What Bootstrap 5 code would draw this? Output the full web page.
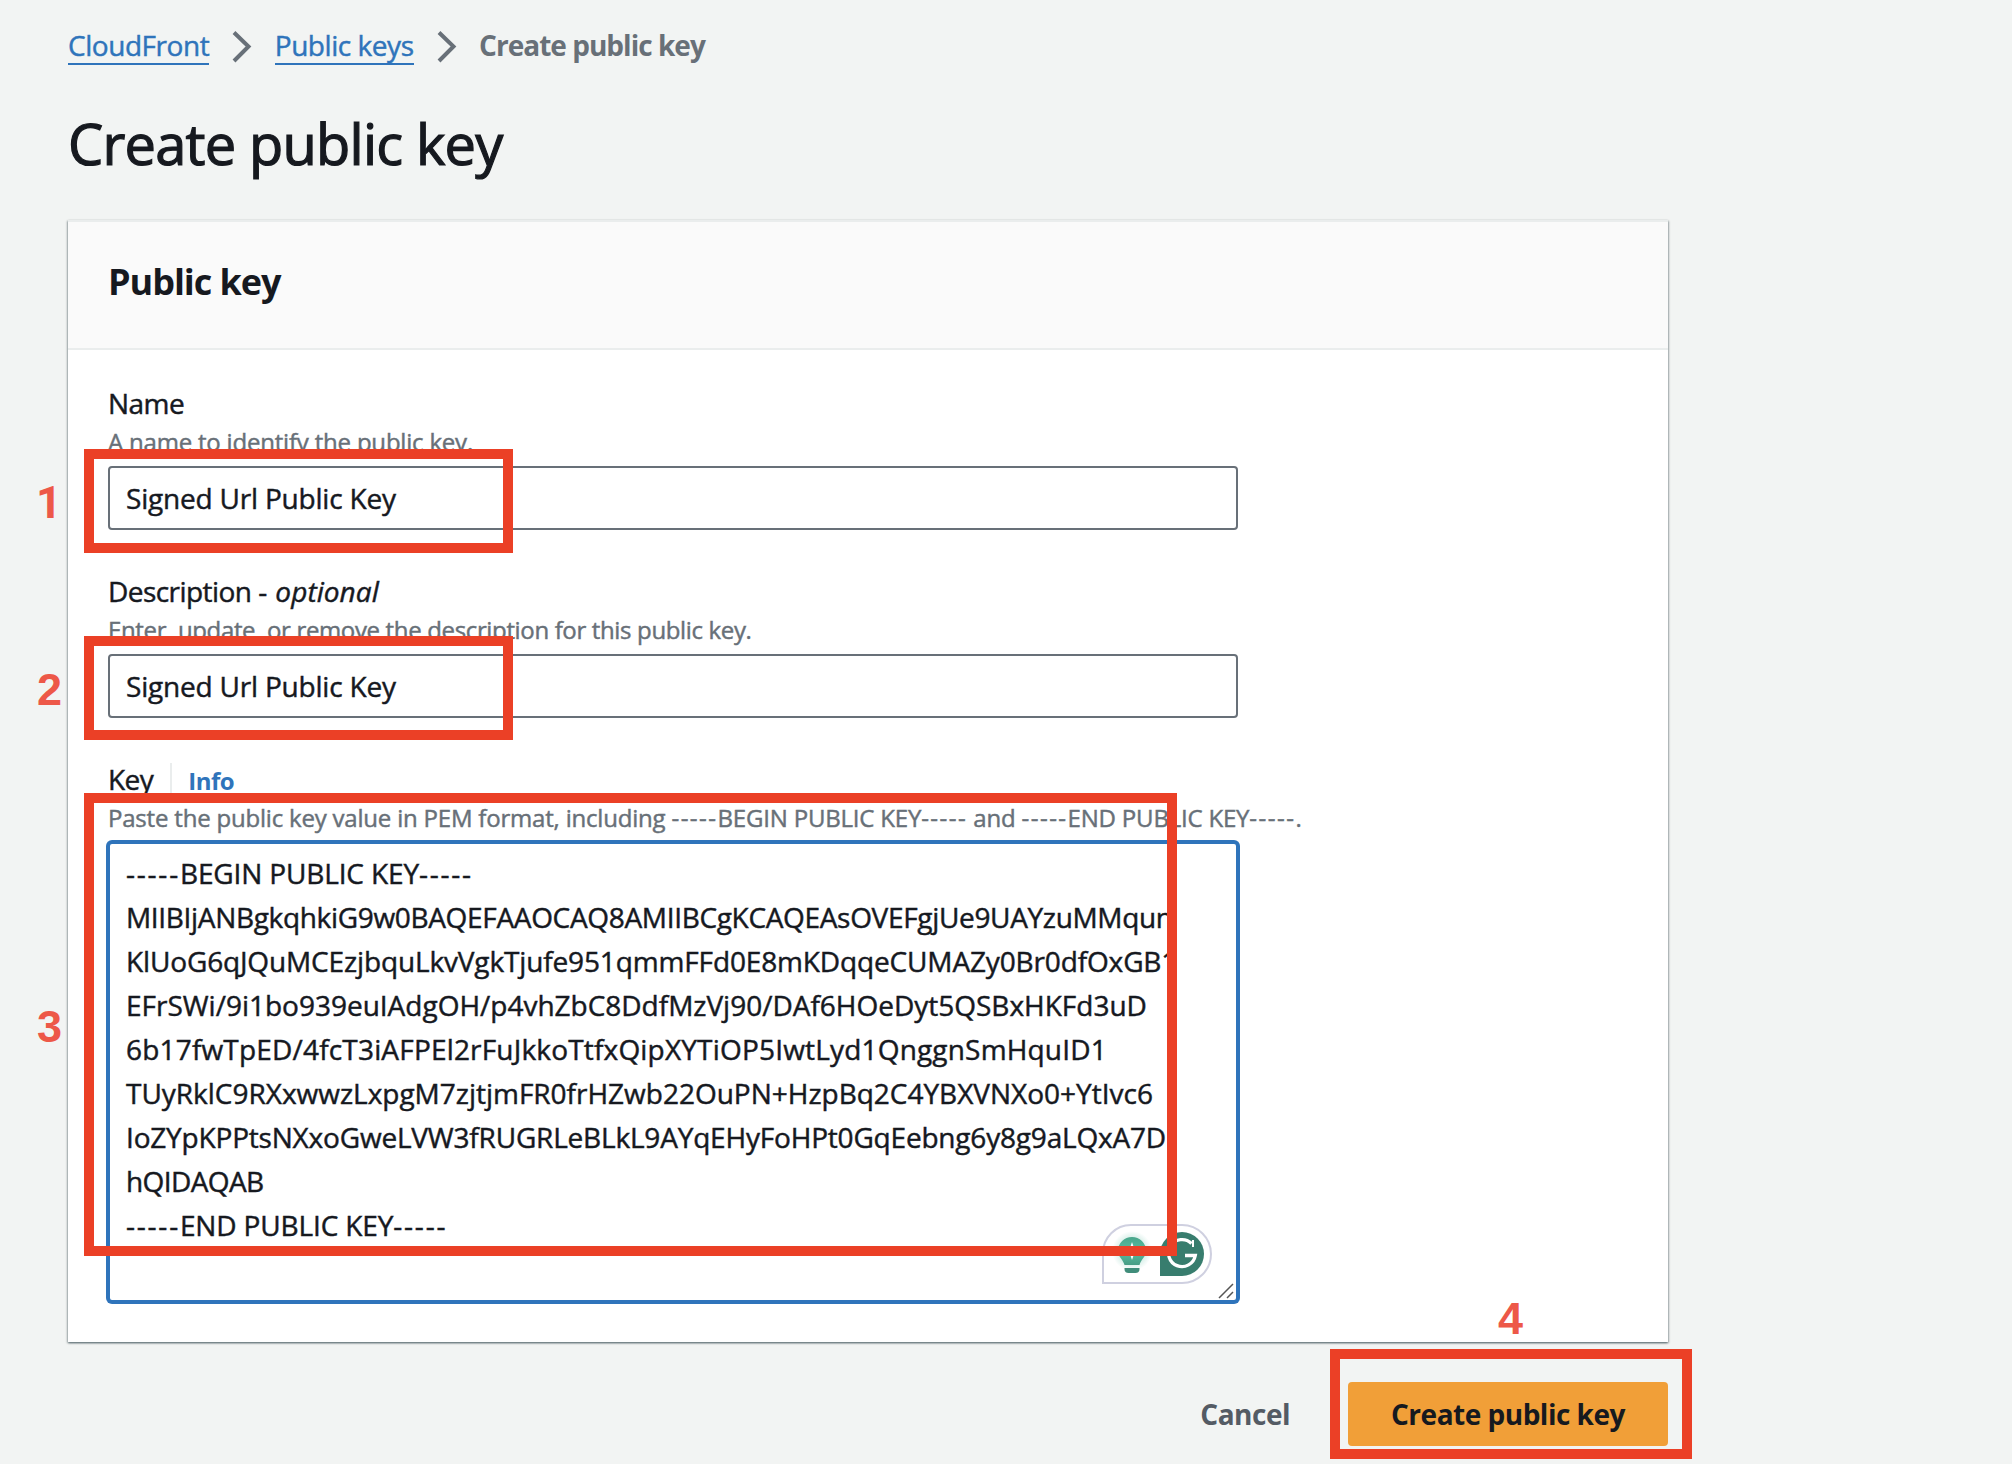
<!DOCTYPE html>
<html lang="en">
<head>
<meta charset="utf-8">
<meta name="viewport" content="width=device-width, initial-scale=1">
<title>Create public key</title>
<link href="https://cdn.jsdelivr.net/npm/bootstrap@5.3.0/dist/css/bootstrap.min.css" rel="stylesheet">
<style>
  body { background: #f2f4f3; color: #16191f; font-family: "Open Sans", "Noto Sans", sans-serif; font-size: 28px; line-height: 44px; -webkit-text-stroke: .45px; }
  .page-wrap { height: 1464px; padding: 23px 0 0 68px; overflow: hidden; }
  .page-col { width: 1600px; }
  .crumbs { height: 44px; }
  .crumbs a { color: #2f74bb; text-decoration: none; height: 42px; line-height: 45px; border-bottom: 2px solid #2f74bb; letter-spacing: -.45px; }
  .crumbs svg { margin: 8px 22.500px 0 23px; }
  .crumb-now { color: #687078; font-weight: 700; line-height: 45px; letter-spacing: -.98px; -webkit-text-stroke: 0; }
  .page-title { font-size: 56px; line-height: 72px; font-weight: 400; margin: 39px 0 42px; padding-top: 1px; height: 72px; letter-spacing: -.8px; -webkit-text-stroke: 1.2px; }
  .panel { border: 0; border-radius: 0; box-shadow: 0 1px 2px 0 #001c2480, 1px 1px 2px 0 #001c2430, -1px 1px 2px 0 #001c2430; }
  .panel-head { background: #fafafa; border-top: 2px solid #eaeded; border-bottom: 2px solid #eaeded; border-radius: 0 !important; padding: 38px 40px 44px; }
  .panel-title { font-size: 36px; line-height: 44px; font-weight: 700; letter-spacing: -1.05px; -webkit-text-stroke: 0; }
  .panel-form { padding: 31px 40px 40px; }
  .field { margin-bottom: 39px; width: 1130px; }
  .field-label { height: 44px; letter-spacing: -.55px; white-space: pre; }
  .field-label i { letter-spacing: .05px; margin-left: 2px; }
  .hint { color: #687078; font-size: 24px; line-height: 34px; margin-bottom: 7px; letter-spacing: -.2px; white-space: nowrap; }
  .hint-tight { letter-spacing: -.35px; }
  .text-input { height: 64px; border: 2px solid #687078; border-radius: 4px; padding: 0 16px; font-size: 28px; line-height: 44px; color: #16191f; letter-spacing: -.2px; }
  .key-box { height: 460px; border: 2px solid #2f74bb; border-radius: 4px; box-shadow: 0 0 0 2px #2f74bb; padding: 7px 16px; white-space: pre; letter-spacing: -.14px; background: #fff; }
  .dash { letter-spacing: 1.78px; }
  .hint .dash { letter-spacing: 1.5px; }
  .k2 { letter-spacing: -.33px; } .k4 { letter-spacing: -.01px; } .k5 { letter-spacing: .18px; } .k7 { letter-spacing: -.19px; } .k8 { letter-spacing: -.6px; }
  .info-link { color: #2f74bb; font-size: 24px; font-weight: 700; text-decoration: none; border-left: 2px solid #eaeded; margin-left: 17px; padding-left: 16px; height: 32px; line-height: 35px; margin-top: 6px; letter-spacing: -.5px; -webkit-text-stroke: 0; }
  .grip { position: absolute; right: 2px; bottom: 1px; }
  .assist { position: absolute; left: 992px; top: 380px; }
  .actions { margin-top: 40px; gap: 58px; }
  .act { border: 0; font-size: 28px; line-height: 44px; font-weight: 700; height: 64px; padding: 10px 0; border-radius: 4px; letter-spacing: -.5px; -webkit-text-stroke: 0; }
  .act-cancel { color: #545b64; }
  .act-main, .act-main:hover { background: #f19f38; color: #16191f; width: 320px; }
  .frame { position: absolute; border: 10px solid #eb4026; }
  .step { position: absolute; color: #ed5848; font: 700 45px/45px "Liberation Sans", Arial, sans-serif; -webkit-text-stroke: 0; }
  .f1 { left: 84px; top: 449px; width: 429px; height: 104px; }
  .f2 { left: 84px; top: 636px; width: 429px; height: 104px; }
  .f3 { left: 84px; top: 793px; width: 1093px; height: 463px; }
  .f4 { left: 1330px; top: 1349px; width: 362px; height: 110px; }
  .s1 { left: 36px; top: 480px; font-family: Roboto, sans-serif; }
  .s2 { left: 37px; top: 667px; }
  .s3 { left: 37px; top: 1004px; }
  .s4 { left: 1498px; top: 1296px; }
</style>
</head>
<body>
<div class="page-wrap position-relative">
  <main class="page-col">
    <nav class="crumbs d-flex" aria-label="breadcrumb">
      <a href="#">CloudFront</a>
      <svg width="20" height="32" viewBox="0 0 20 32"><path d="M2 1.5 16.5 15.5 2 30" fill="none" stroke="#687078" stroke-width="4"/></svg>
      <a href="#">Public keys</a>
      <svg width="20" height="32" viewBox="0 0 20 32"><path d="M2 1.5 16.5 15.5 2 30" fill="none" stroke="#687078" stroke-width="4"/></svg>
      <span class="crumb-now">Create public key</span>
    </nav>
    <h1 class="page-title">Create public key</h1>

    <section class="card panel">
      <div class="card-header panel-head"><h2 class="panel-title m-0">Public key</h2></div>
      <div class="card-body panel-form">
        <div class="field">
          <label class="field-label d-block" for="key-name">Name</label>
          <div class="hint">A name to identify the public key.</div>
          <input id="key-name" class="form-control text-input" value="Signed Url Public Key">
        </div>
        <div class="field">
          <label class="field-label d-block" for="key-desc">Description - <i>optional</i></label>
          <div class="hint hint-tight">Enter, update, or remove the description for this public key.</div>
          <input id="key-desc" class="form-control text-input" value="Signed Url Public Key">
        </div>
        <div class="field mb-0">
          <div class="field-label d-flex"><span>Key</span><a class="info-link" href="#">Info</a></div>
          <div class="hint">Paste the public key value in PEM format, including <span class="dash">-----</span>BEGIN PUBLIC KEY<span class="dash">-----</span> and <span class="dash">-----</span>END PUBLIC KEY<span class="dash">-----</span>.</div>
          <div class="key-box position-relative" role="textbox" aria-multiline="true"><span class="dash">-----</span>BEGIN PUBLIC KEY<span class="dash">-----</span>
<span class="k2">MIIBIjANBgkqhkiG9w0BAQEFAAOCAQ8AMIIBCgKCAQEAsOVEFgjUe9UAYzuMMqun</span>
KlUoG6qJQuMCEzjbquLkvVgkTjufe951qmmFFd0E8mKDqqeCUMAZy0Br0dfOxGB1
<span class="k4">EFrSWi/9i1bo939euIAdgOH/p4vhZbC8DdfMzVj90/DAf6HOeDyt5QSBxHKFd3uD</span>
<span class="k5">6b17fwTpED/4fcT3iAFPEl2rFuJkkoTtfxQipXYTiOP5IwtLyd1QnggnSmHquID1</span>
<span class="k4">TUyRklC9RXxwwzLxpgM7zjtjmFR0frHZwb22OuPN+HzpBq2C4YBXVNXo0+YtIvc6</span>
<span class="k7">IoZYpKPPtsNXxoGweLVW3fRUGRLeBLkL9AYqEHyFoHPt0GqEebng6y8g9aLQxA7D</span>
<span class="k8">hQIDAQAB</span>
<span class="dash">-----</span>END PUBLIC KEY<span class="dash">-----</span><svg class="grip" width="16" height="16" viewBox="0 0 16 16"><path d="M1 15 15 1M9 15l6-6" stroke="#555" stroke-width="1.5" fill="none"/></svg><svg class="assist" width="110" height="60" viewBox="0 0 110 60"><defs><radialGradient id="glow"><stop offset=".55" stop-color="#4fb89b" stop-opacity=".28"/><stop offset="1" stop-color="#4fb89b" stop-opacity="0"/></radialGradient><linearGradient id="bulb" x2="0" y2="1"><stop offset="0" stop-color="#4aa68c"/><stop offset=".5" stop-color="#58bd9f"/><stop offset="1" stop-color="#479d85"/></linearGradient></defs>
<path d="M1 59V29A28 28 0 0 1 29 1H80A29 29 0 0 1 80 59Z" fill="#fff" stroke="#cfd0e0" stroke-width="2"/>
<circle cx="30" cy="27" r="20" fill="url(#glow)"/>
<path d="M30 13a14 14 0 0 0-14 14c0 6 5 8 6.500 14h15c1.500-6 6.500-8 6.500-14a14 14 0 0 0-14-14Z" fill="url(#bulb)"/>
<path d="M30 18l3 9-3 9-3-9Z" fill="#fff"/><path d="M22.500 44h15v1a4 4 0 0 1-4 4h-7a4 4 0 0 1-4-4Z" fill="#408d7a"/>
<path d="M58 52V30A22 22 0 1 1 80 52Z" fill="#387d6e"/>
<path d="M89.500 19.500A13.500 13.500 0 1 0 93.300 31.500H83" fill="none" stroke="#fff" stroke-width="3.300"/><path d="M91 23V16" stroke="#fff" stroke-width="2"/></svg></div>
        </div>
      </div>
    </section>

    <div class="actions d-flex justify-content-end">
      <button class="btn act act-cancel" type="button">Cancel</button>
      <button class="btn act act-main" type="button">Create public key</button>
    </div>
  </main>

  <div class="frame f1"></div><div class="frame f2"></div><div class="frame f3"></div><div class="frame f4"></div>
  <span class="step s1">1</span><span class="step s2">2</span><span class="step s3">3</span><span class="step s4">4</span>
</div>
<script src="https://cdn.jsdelivr.net/npm/bootstrap@5.3.0/dist/js/bootstrap.bundle.min.js"></script>
</body>
</html>
